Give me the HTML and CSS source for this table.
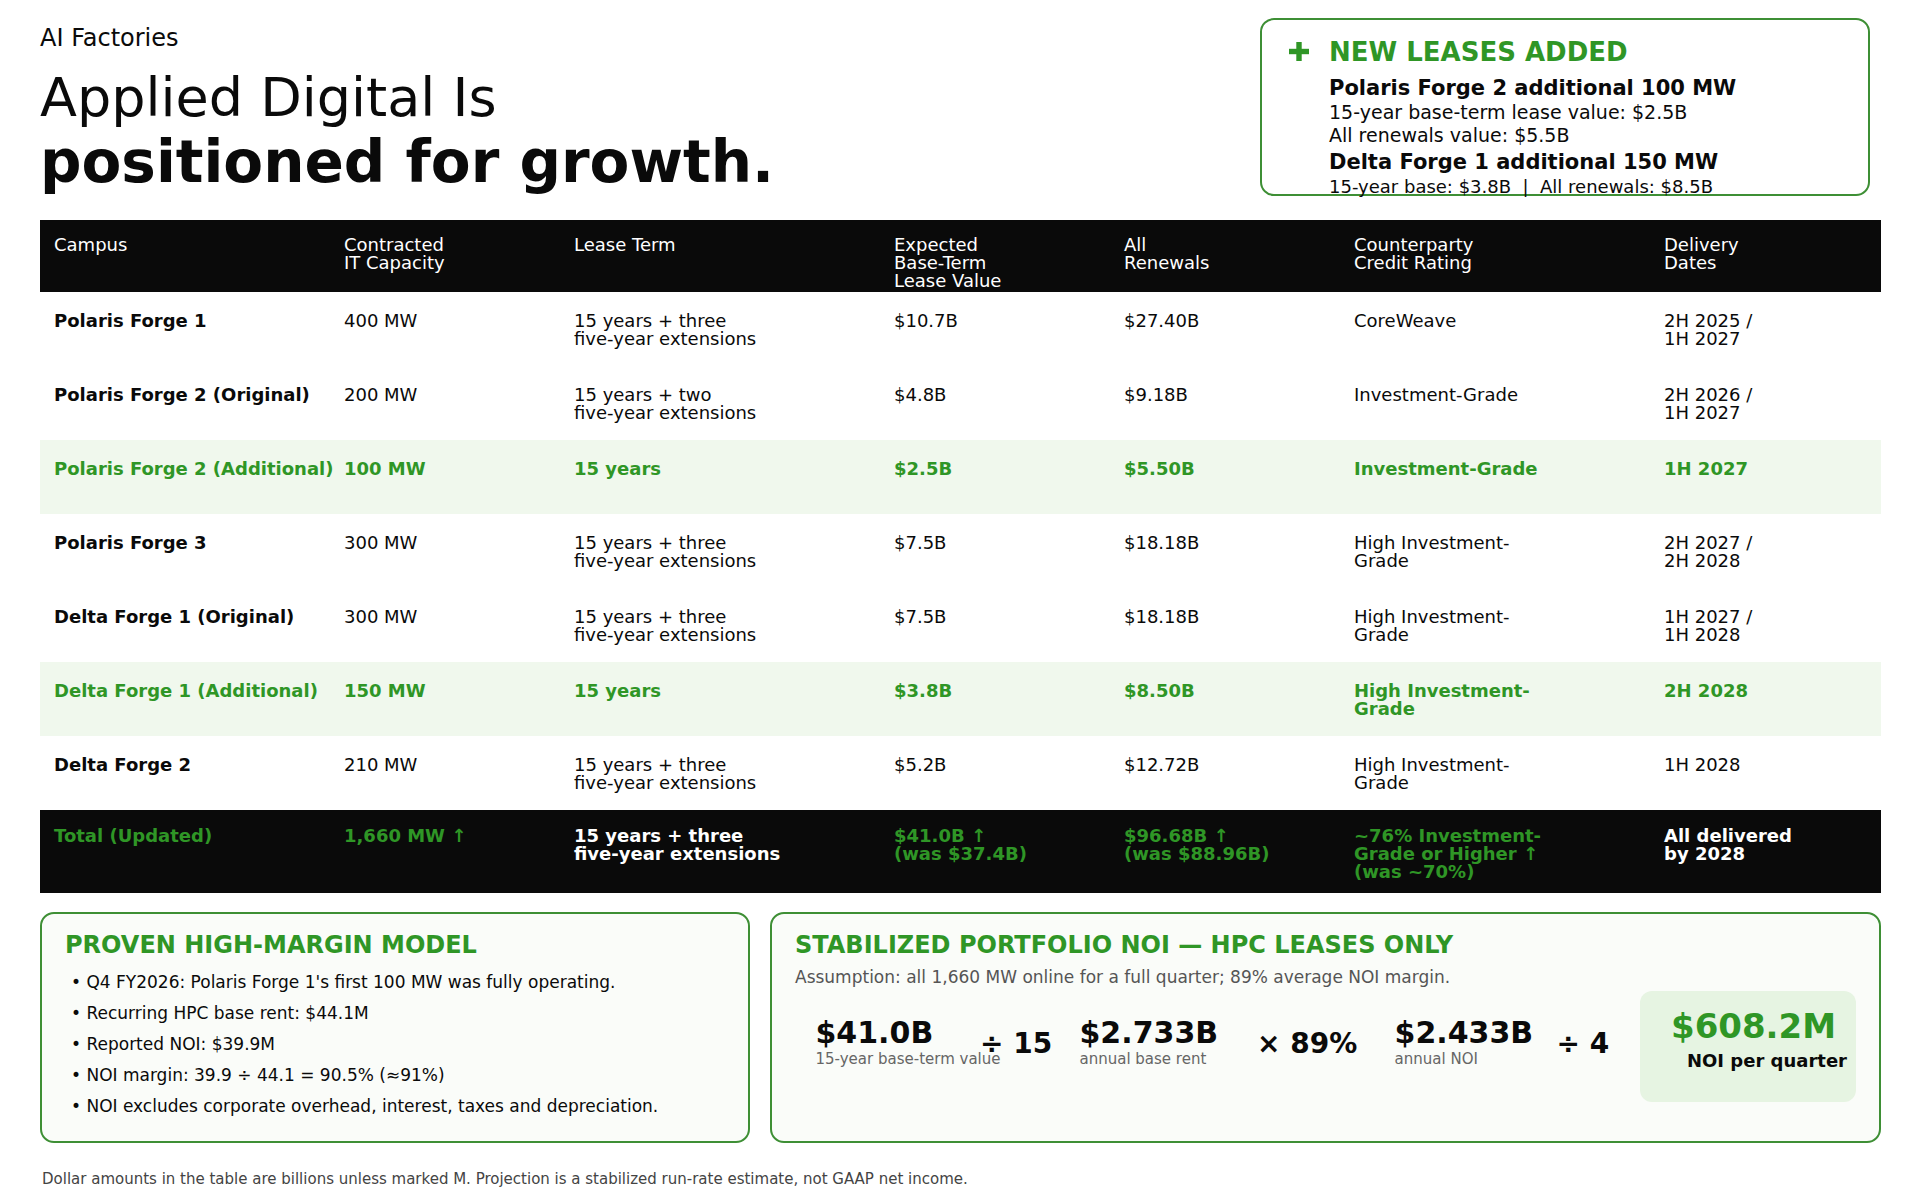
FILE: index.html
```html
<!DOCTYPE html>
<html lang="en">
<head>
<meta charset="utf-8">
<title>AI Factories</title>
<link rel="stylesheet" href="styles.css">
</head>
<body>
<div class="page">
  <header class="top">
    <div class="heading">
      <div class="eyebrow">AI Factories</div>
      <h1 class="title"><span class="t1">Applied Digital Is</span><span class="t2">positioned for growth.</span></h1>
    </div>
    <aside class="news">
      <svg class="news-plus" width="20" height="19" viewBox="0 0 20 19" aria-hidden="true">
        <rect x="0" y="6.8" width="20" height="5.4" fill="#2f9626"/>
        <rect x="7.3" y="0" width="5.4" height="19" fill="#2f9626"/>
      </svg>
      <div class="news-body">
        <div class="news-title">NEW LEASES ADDED</div>
        <div class="news-strong">Polaris Forge 2 additional 100 MW</div>
        <div class="news-line">15-year base-term lease value: $2.5B</div>
        <div class="news-line">All renewals value: $5.5B</div>
        <div class="news-strong news-gap">Delta Forge 1 additional 150 MW</div>
        <div class="news-line news-small">15-year base: $3.8B&nbsp;&nbsp;|&nbsp;&nbsp;All renewals: $8.5B</div>
      </div>
    </aside>
  </header>

  <table class="leases">
    <colgroup>
      <col class="c1"><col class="c2"><col class="c3"><col class="c4"><col class="c5"><col class="c6"><col class="c7">
    </colgroup>
    <thead>
      <tr>
        <th>Campus</th>
        <th>Contracted<br>IT Capacity</th>
        <th>Lease Term</th>
        <th>Expected<br>Base-Term<br>Lease Value</th>
        <th>All<br>Renewals</th>
        <th>Counterparty<br>Credit Rating</th>
        <th>Delivery<br>Dates</th>
      </tr>
    </thead>
    <tbody>
      <tr>
        <td class="name">Polaris Forge 1</td><td>400 MW</td><td>15 years + three<br>five-year extensions</td><td>$10.7B</td><td>$27.40B</td><td>CoreWeave</td><td>2H 2025 /<br>1H 2027</td>
      </tr>
      <tr>
        <td class="name">Polaris Forge 2 (Original)</td><td>200 MW</td><td>15 years + two<br>five-year extensions</td><td>$4.8B</td><td>$9.18B</td><td>Investment-Grade</td><td>2H 2026 /<br>1H 2027</td>
      </tr>
      <tr class="added">
        <td>Polaris Forge 2 (Additional)</td><td>100 MW</td><td>15 years</td><td>$2.5B</td><td>$5.50B</td><td>Investment-Grade</td><td>1H 2027</td>
      </tr>
      <tr>
        <td class="name">Polaris Forge 3</td><td>300 MW</td><td>15 years + three<br>five-year extensions</td><td>$7.5B</td><td>$18.18B</td><td>High Investment-<br>Grade</td><td>2H 2027 /<br>2H 2028</td>
      </tr>
      <tr>
        <td class="name">Delta Forge 1 (Original)</td><td>300 MW</td><td>15 years + three<br>five-year extensions</td><td>$7.5B</td><td>$18.18B</td><td>High Investment-<br>Grade</td><td>1H 2027 /<br>1H 2028</td>
      </tr>
      <tr class="added">
        <td>Delta Forge 1 (Additional)</td><td>150 MW</td><td>15 years</td><td>$3.8B</td><td>$8.50B</td><td>High Investment-<br>Grade</td><td>2H 2028</td>
      </tr>
      <tr>
        <td class="name">Delta Forge 2</td><td>210 MW</td><td>15 years + three<br>five-year extensions</td><td>$5.2B</td><td>$12.72B</td><td>High Investment-<br>Grade</td><td>1H 2028</td>
      </tr>
    </tbody>
    <tfoot>
      <tr>
        <td class="g">Total (Updated)</td>
        <td class="g">1,660 MW ↑</td>
        <td>15 years + three<br>five-year extensions</td>
        <td class="g">$41.0B ↑<br>(was $37.4B)</td>
        <td class="g">$96.68B ↑<br>(was $88.96B)</td>
        <td class="g">~76% Investment-<br>Grade or Higher ↑<br>(was ~70%)</td>
        <td>All delivered<br>by 2028</td>
      </tr>
    </tfoot>
  </table>

  <section class="panels">
    <div class="panel panel-left">
      <h2 class="panel-title">PROVEN HIGH-MARGIN MODEL</h2>
      <ul class="bullets">
        <li>• Q4 FY2026: Polaris Forge 1's first 100 MW was fully operating.</li>
        <li>• Recurring HPC base rent: $44.1M</li>
        <li>• Reported NOI: $39.9M</li>
        <li>• NOI margin: 39.9 ÷ 44.1 = 90.5% (≈91%)</li>
        <li>• NOI excludes corporate overhead, interest, taxes and depreciation.</li>
      </ul>
    </div>
    <div class="panel panel-right">
      <h2 class="panel-title">STABILIZED PORTFOLIO NOI — HPC LEASES ONLY</h2>
      <p class="assume">Assumption: all 1,660 MW online for a full quarter; 89% average NOI margin.</p>
      <div class="formula">
        <div class="fnum"><div class="fval">$41.0B</div><div class="fsub">15-year base-term value</div></div>
        <div class="fop">÷ 15</div>
        <div class="fnum"><div class="fval">$2.733B</div><div class="fsub">annual base rent</div></div>
        <div class="fop">× 89%</div>
        <div class="fnum"><div class="fval">$2.433B</div><div class="fsub">annual NOI</div></div>
        <div class="fop">÷ 4</div>
        <div class="result">
          <div class="rval">$608.2M</div>
          <div class="rlabel">NOI per quarter</div>
        </div>
      </div>
    </div>
  </section>

  <p class="footnote">Dollar amounts in the table are billions unless marked M. Projection is a stabilized run-rate estimate, not GAAP net income.</p>
</div>
</body>
</html>
```

FILE: styles.css
```css
* { box-sizing: border-box; }

html, body {
  margin: 0;
  padding: 0;
  background: #ffffff;
}

body {
  font-family: "DejaVu Sans", "Liberation Sans", sans-serif;
  color: #0a0a0a;
}

.page {
  width: 1920px;
  padding: 18px 39px 0 40px;
}

/* ---------- top ---------- */
.top {
  display: flex;
  justify-content: space-between;
  align-items: flex-start;
  margin-bottom: 24px;
}

.eyebrow {
  font-size: 24px;
  line-height: 28px;
  margin-top: 6px;
}

.title {
  margin: 14px 0 0 0;
  font-weight: normal;
}

.title .t1 {
  display: block;
  font-size: 54px;
  line-height: 63px;
  font-weight: normal;
}

.title .t2 {
  display: block;
  font-size: 58px;
  line-height: 66px;
  font-weight: bold;
}

.news {
  width: 610px;
  height: 178px;
  margin-right: 11px;
  border: 2px solid #3e8f35;
  border-radius: 14px;
  padding: 17px 20px 0 26px;
  display: grid;
  grid-template-columns: 41px 1fr;
  align-items: start;
}

.news-plus {
  display: block;
  margin-top: 5px;
  margin-left: 0.5px;
}

.news-title {
  color: #2f9626;
  font-weight: bold;
  font-size: 26px;
  line-height: 30px;
  margin-bottom: 9px;
}

.news-strong {
  font-weight: bold;
  font-size: 21px;
  line-height: 25px;
}

.news-gap { margin-top: 2px; }

.news-line {
  font-size: 19px;
  line-height: 23.3px;
  white-space: nowrap;
}

.news-small { font-size: 18px; }

/* ---------- table ---------- */
.leases {
  width: 1841px;
  border-collapse: collapse;
  table-layout: fixed;
  font-size: 18px;
}

.c1 { width: 290px; }
.c2 { width: 230px; }
.c3 { width: 320px; }
.c4 { width: 230px; }
.c5 { width: 230px; }
.c6 { width: 310px; }
.c7 { width: 231px; }

.leases th {
  background: #0a0a0a;
  color: #ffffff;
  font-weight: normal;
  text-align: left;
  vertical-align: top;
  font-size: 18px;
  line-height: 18px;
  padding: 15.5px 14px 2.2px 14px;
}

.leases tbody tr { height: 74px; }

.leases tbody td {
  vertical-align: top;
  line-height: 18.7px;
  padding: 20px 14px 0 14px;
  white-space: nowrap;
}

.leases td.name { font-weight: bold; }

.leases tr.added td {
  background: #f0f8ed;
  color: #2f9626;
  font-weight: bold;
}

.leases tfoot tr { height: 83px; }

.leases tfoot td {
  background: #0a0a0a;
  color: #ffffff;
  font-weight: bold;
  vertical-align: top;
  line-height: 18px;
  padding: 17.7px 14px 0 14px;
  white-space: nowrap;
}

.leases tfoot td.g { color: #2f9626; }

/* ---------- panels ---------- */
.panels {
  display: flex;
  gap: 20px;
  margin-top: 19px;
  margin-right: 1px;
  align-items: stretch;
}

.panel {
  border: 2px solid #3e8f35;
  border-radius: 14px;
  background: #fafcf9;
  padding: 18.5px 23px 18.7px 23px;
}

.panel-left { width: 710px; flex: none; }
.panel-right { flex: 1; }

.panel-title {
  margin: 0;
  color: #2f9626;
  font-size: 24px;
  line-height: 27.9px;
  font-weight: bold;
}

.bullets {
  list-style: none;
  margin: 7px 0 0 0;
  padding: 0 0 0 6px;
  font-size: 17px;
  line-height: 31px;
}

.assume {
  margin: 6px 0 0 0;
  color: #555555;
  font-size: 17px;
  line-height: 22px;
}

.formula {
  margin-top: 3px;
  padding-left: 20.5px;
  display: grid;
  grid-template-columns: 164.5px 99.5px 177.5px 137.6px 162px 83.4px 216px;
  align-items: center;
}

.fnum {
  padding-bottom: 11px;
  white-space: nowrap;
}

.fval {
  font-size: 30px;
  font-weight: bold;
  line-height: normal;
}

.fsub {
  font-size: 15px;
  color: #666666;
  line-height: normal;
}

.fop {
  padding-bottom: 6px;
  white-space: nowrap;
  font-size: 28px;
  font-weight: bold;
  line-height: normal;
}

.result {
  height: 111px;
  background: #e6f4e2;
  border-radius: 12px;
  padding: 14.7px 0 0 31px;
  white-space: nowrap;
}

.rval {
  color: #2f9626;
  font-size: 34px;
  font-weight: bold;
  line-height: normal;
}

.rlabel {
  font-size: 18px;
  font-weight: bold;
  line-height: 21px;
  margin: 4.3px 0 0 16px;
}

.footnote {
  margin: 27.7px 0 0 2px;
  font-size: 15px;
  line-height: normal;
  color: #444444;
}
```
